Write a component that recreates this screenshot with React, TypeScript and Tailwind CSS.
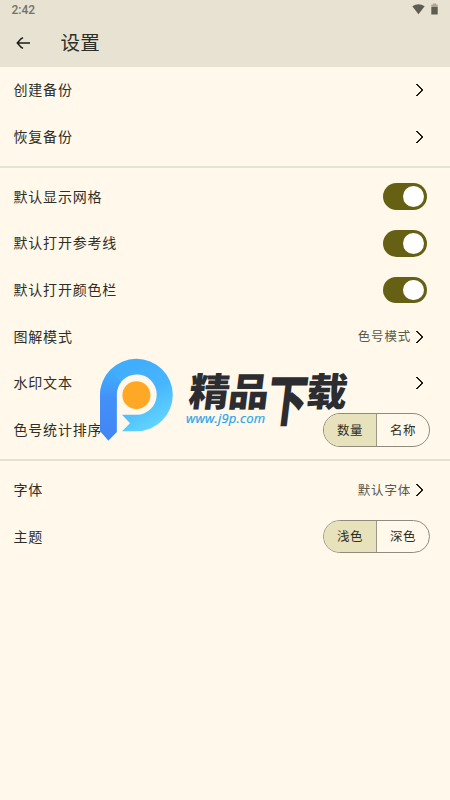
import { useState } from "react";
import clsx from "clsx";

function Chevron() {
  return (
    <svg
      width="8"
      height="12"
      viewBox="0 0 8 12"
      fill="none"
      stroke="#1d1c14"
      strokeWidth="1.5"
      shapeRendering="crispEdges"
      className="flex-none"
    >
      <path d="M0.5 0.5L2 1.5L6.8 6L2 10.5L0.5 11.5" />
    </svg>
  );
}

function Row({ label, children }: { label: string; children?: React.ReactNode }) {
  return (
    <div className="flex h-[46.67px] items-center pr-5 pl-[13.5px]">
      <div className="flex-1 pb-px text-[14px] tracking-[0.8px]">{label}</div>
      {children}
    </div>
  );
}

function LinkRow({ label, value }: { label: string; value?: string }) {
  return (
    <Row label={label}>
      <div className="flex items-center gap-[5px] pr-[6px]">
        {value && (
          <span className="text-[12.5px] tracking-[0.8px] text-[#5b594c]">{value}</span>
        )}
        <Chevron />
      </div>
    </Row>
  );
}

function Toggle() {
  const [on, setOn] = useState(true);
  return (
    <button
      type="button"
      onClick={() => setOn(!on)}
      className={clsx(
        "mr-[3px] flex h-[26.67px] w-[43.7px] items-center rounded-full px-[3.4px]",
        on ? "justify-end bg-[#656014]" : "justify-start bg-[#cac7b6]"
      )}
    >
      <span className="size-[20.5px] rounded-full bg-white" />
    </button>
  );
}

function Segmented({ options }: { options: string[] }) {
  const [active, setActive] = useState(0);
  return (
    <div className="flex h-[33.5px] w-[107px] overflow-hidden rounded-full border border-[#8f8c7b]">
      {options.map((option, i) => (
        <button
          type="button"
          key={option}
          onClick={() => setActive(i)}
          className={clsx(
            "flex-1 text-[12.5px] tracking-[0.4px]",
            i > 0 && "border-l border-[#9b9887]",
            i === active && "bg-[#e8e2bc]"
          )}
        >
          {option}
        </button>
      ))}
    </div>
  );
}

function Divider() {
  return (
    <div className="flex h-[13.33px] items-center">
      <div className="h-[2px] w-full bg-[#e4e2d3]" />
    </div>
  );
}

function Watermark() {
  return (
    <svg
      width="272"
      height="130"
      viewBox="98 340 272 130"
      className="pointer-events-none absolute top-[340px] left-[98px] overflow-visible"
    >
      <defs>
        <linearGradient id="ring" x1="112" y1="362" x2="150" y2="431" gradientUnits="userSpaceOnUse">
          <stop offset="0" stopColor="#3eabfc" />
          <stop offset="0.55" stopColor="#47b5ff" />
          <stop offset="1" stopColor="#62d6ff" />
        </linearGradient>
        <linearGradient id="stem" x1="0" y1="370" x2="0" y2="440" gradientUnits="userSpaceOnUse">
          <stop offset="0" stopColor="#3f96fa" stopOpacity="0" />
          <stop offset="0.4" stopColor="#4390f8" />
          <stop offset="1" stopColor="#4285f5" />
        </linearGradient>
      </defs>
      <path
        d="M100 395.3A36.4 36.2 0 1 1 136.5 431.2H122L130 423.3L122 414.8H136.7A20 20.2 0 1 0 116.7 395V432L108.4 440.4L100 431Z"
        fill="url(#ring)"
      />
      <path
        d="M100 395.3C100 386 104 376 111 370L121 382.5C118 386 116.7 390 116.7 395V432L108.4 440.4L100 431Z"
        fill="url(#stem)"
      />
      <circle cx="136.4" cy="395.2" r="14" fill="#ffa826" />
      <g
        fill="#2b2d31"
        fontFamily='"Noto Sans CJK SC", sans-serif'
        fontWeight="900"
        fontSize="40"
      >
        <text transform="translate(187.5 406) skewX(-7) scale(1.02 .97)">精</text>
        <text transform="translate(227 406) skewX(-7) scale(1.02 .97)">品</text>
        <text transform="translate(265 420.5) skewX(-7) scale(1 1.4)">下</text>
        <text transform="translate(305 406) skewX(-7) scale(1.02 .97)">载</text>
      </g>
      <text
        x="186"
        y="423.4"
        fill="#25a5ea"
        fontFamily='"Open Sans", "Noto Sans", sans-serif'
        fontStyle="italic"
        fontWeight="400"
        fontSize="13"
        textLength="79"
        stroke="#25a5ea"
        strokeWidth="0.2"
      >
        www.j9p.com
      </text>
    </svg>
  );
}

export default function App() {
  return (
    <div className="relative h-screen w-full overflow-hidden bg-[#fff8eb] font-['Noto_Sans_CJK_SC',sans-serif] font-normal text-[#2f2e25]">
      <header className="h-[66.67px] bg-[#e7e2d1]">
        <div className="flex h-5 items-center justify-between pr-[12px] pl-[11.5px]">
          <span className="font-[Roboto,sans-serif] text-[12px] font-medium text-[#74726a]">2:42</span>
          <div className="flex items-center gap-[6px] pb-[2px]">
            <svg width="13" height="11" viewBox="0 0 13 11" fill="#5f5d52">
              <path d="M0.3 2.3Q6.5 -1.8 12.7 2.3L6.5 10.3Z" />
            </svg>
            <svg width="7" height="12" viewBox="0 0 7 12">
              <path d="M2 0.5H5V1.6H6.7V4H0.3V1.6H2Z" fill="#aaa797" />
              <path d="M0.3 4H6.7V11.5H0.3Z" fill="#5f5d52" />
            </svg>
          </div>
        </div>
        <div className="flex h-[46px] items-center pl-[16px]">
          <svg width="15" height="12" viewBox="0 0 15 12" fill="none" stroke="#1d1c14" strokeWidth="1.5">
            <path d="M1 6H14M7 0.7L5 1.8L1.3 6L5 10.2L7 11.3" />
          </svg>
          <h1 className="pb-[2px] pl-[29.5px] text-[19.5px] tracking-[0.3px]">设置</h1>
        </div>
      </header>

      <LinkRow label="创建备份" />
      <LinkRow label="恢复备份" />
      <Divider />
      <Row label="默认显示网格">
        <Toggle />
      </Row>
      <Row label="默认打开参考线">
        <Toggle />
      </Row>
      <Row label="默认打开颜色栏">
        <Toggle />
      </Row>
      <LinkRow label="图解模式" value="色号模式" />
      <LinkRow label="水印文本" />
      <Row label="色号统计排序">
        <Segmented options={["数量", "名称"]} />
      </Row>
      <Divider />
      <LinkRow label="字体" value="默认字体" />
      <Row label="主题">
        <Segmented options={["浅色", "深色"]} />
      </Row>

      <Watermark />
    </div>
  );
}
